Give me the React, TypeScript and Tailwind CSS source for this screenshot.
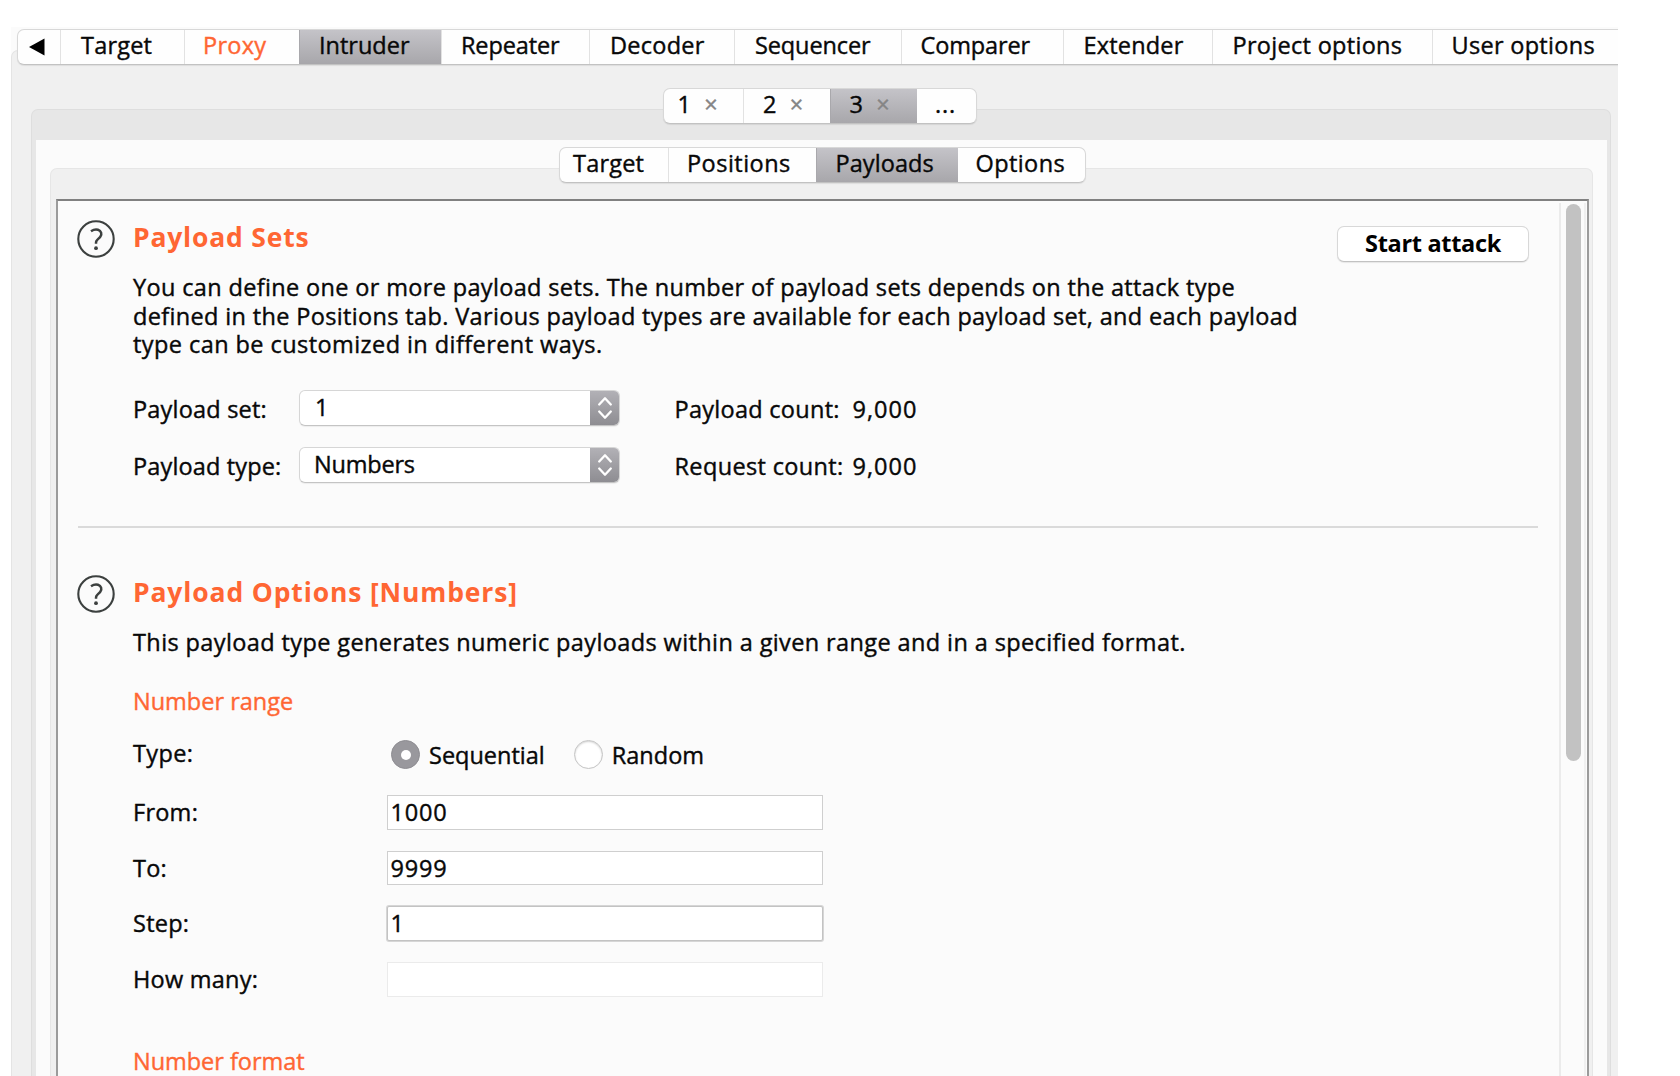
import type { ReactNode } from "react";

function Tab({ label, className, selected }: { label: ReactNode; className: string; selected?: boolean }) {
  return (
    <button
      className={`flex shrink-0 items-center whitespace-nowrap border-l text-left ${className} ${
        selected ? "-my-px border-[#a9a8ac] bg-linear-to-b from-[#c5c4c9] to-[#a7a6aa]" : "border-[#e2e2e2]"
      }`}
    >
      {label}
    </button>
  );
}

function NumberedTab({ n, className, selected }: { n: string; className: string; selected?: boolean }) {
  return (
    <Tab
      className={className}
      selected={selected}
      label={
        <>
          <span>{n}</span>
          <span className="ml-[13px] text-[#858585]">×</span>
        </>
      }
    />
  );
}

function HelpIcon({ className }: { className: string }) {
  return (
    <svg className={`size-[38px] shrink-0 ${className}`} viewBox="0 0 38 38" fill="none" stroke="#3c403f">
      <circle cx="19" cy="19" r="17.7" strokeWidth="2.1" />
      <path d="M14 11.2C16.5 9.6 19 9.2 21 9.8c3.200 1 4.300 4.400 2.300 7-1.300 1.700-3.300 2.600-4 4.400-.3.800-.3 1.600-.3 2.600" strokeWidth="2.500" />
      <circle cx="19" cy="28.200" r="1.900" fill="#3c403f" stroke="none" />
    </svg>
  );
}

function Select({ value, pad }: { value: string; pad: string }) {
  return (
    <div className="flex h-9 w-[321px] overflow-hidden rounded-[6px] border border-[#d6d6d6] border-b-[#c4c4c4] bg-white shadow-[0_1px_1px_rgba(0,0,0,0.06)]">
      <div className={`flex-1 pb-[2px] leading-[32px] ${pad}`}>{value}</div>
      <div className="-my-px -mr-px flex w-[30px] items-center justify-center bg-linear-to-b from-[#b3b2b7] to-[#8d8c91]">
        <svg width="16" height="24" viewBox="0 0 16 24" fill="none" stroke="white" strokeWidth="2.300" strokeLinecap="round" strokeLinejoin="round">
          <path d="M2.200 8.500 8 2.300l5.800 6.200M2.200 15.500 8 21.700l5.800-6.200" />
        </svg>
      </div>
    </div>
  );
}

function Field({ label, value, box }: { label: string; value: string; box: string }) {
  return (
    <div className="flex h-[34.5px] items-center">
      <label className="w-[253.5px] tracking-[0.25px]">{label}</label>
      <div className={`h-[34.5px] w-[436px] bg-white pl-[3px] leading-[32.5px] tracking-[0.8px] ${box}`}>{value}</div>
    </div>
  );
}

function Radio({ label, checked }: { label: string; checked?: boolean }) {
  return (
    <label className="flex items-center">
      {checked ? (
        <span className="flex size-[29px] items-center justify-center rounded-full border border-[#8e8d92] bg-[#99989d]">
          <span className="size-[10px] rounded-full bg-white" />
        </span>
      ) : (
        <span className="size-[29px] rounded-full border border-[#c4c4c4] bg-white shadow-[inset_0_1px_2px_rgba(0,0,0,0.18)]" />
      )}
      <span className="ml-[9px] pt-[2px] tracking-[0px]">{label}</span>
    </label>
  );
}

const tabBar =
  "relative z-10 flex h-[36px] overflow-hidden border border-[#d8d8d8] border-b-[#c2c2c2] bg-[#fefefe] shadow-[0_1px_1px_rgba(0,0,0,0.08)]";

export default function App() {
  return (
    <div className="h-[1076px] w-[1680px] overflow-hidden bg-white pl-[11px] pt-[27px] font-['Open_Sans','Noto_Sans',sans-serif] text-[23.5px] leading-[28.7px] tracking-[0.36px] text-[#080808] [-webkit-text-stroke-width:0.4px]">
      <div className="flex h-[1049px] w-[1607px] flex-col overflow-hidden bg-[#fbfbfb] pt-[2px]">
        <nav className={`${tabBar} ml-[6px] w-[1610px] shrink-0 rounded-l-[7px]`}>
          <button className="flex w-[42px] items-center pl-[11px]">
            <svg width="16" height="18" viewBox="0 0 16 18">
              <path d="M0 9 15.500.5v17z" fill="#000" />
            </svg>
          </button>
          <Tab className="w-[124px] pb-[3px] pl-5 tracking-[0.19px]" label="Target" />
          <Tab className="w-[115px] pb-[3px] pl-[18px] tracking-[0.25px] text-[#ff6633]" label="Proxy" />
          <Tab className="w-[142px] pb-[3px] pl-[19px] tracking-[0px]" label="Intruder" selected />
          <Tab className="w-[148px] pb-[3px] pl-[19px] tracking-[-0.13px]" label="Repeater" />
          <Tab className="w-[145px] pb-[3px] pl-5 tracking-[0.25px]" label="Decoder" />
          <Tab className="w-[167px] pb-[3px] pl-5 tracking-[-0.12px]" label="Sequencer" />
          <Tab className="w-[162px] pb-[3px] pl-[18.5px] tracking-[-0.13px]" label="Comparer" />
          <Tab className="w-[149px] pb-[3px] pl-[19.5px] tracking-[0.18px]" label="Extender" />
          <Tab className="w-[220px] pb-[3px] pl-[19.5px] tracking-[0.3px]" label="Project options" />
          <Tab className="w-[190px] pb-[3px] pl-[18.5px] tracking-[0.3px]" label="User options" />
        </nav>

        <div className="-mt-[15px] flex grow flex-col rounded-tl-[7px] border-l border-t border-[#e4e4e4] bg-[#f0f0f0] pt-[37px]">
          <nav className={`${tabBar} ml-[651px] w-[314px] shrink-0 rounded-[7px]`}>
            <NumberedTab className="w-[79px] border-l-0 pb-[3px] pl-[13.5px]" n="1" />
            <NumberedTab className="w-[87px] pb-[3px] pl-[19px]" n="2" />
            <NumberedTab className="w-[87px] pb-[3px] pl-[18.5px]" n="3" selected />
            <Tab className="w-[60px] border-l-0 pb-[3px] pl-[18px] tracking-[0.8px]" label="..." />
          </nav>

          <div className="-mt-[15px] ml-[19px] flex w-[1580px] grow flex-col rounded-t-[7px] border border-b-0 border-[#dedede] bg-[#e7e7e7] pl-1 pr-[3px] pt-[30px]">
            <div className="flex grow flex-col bg-[#fbfbfb] pt-[7px]">
              <nav className={`${tabBar} ml-[523px] w-[527px] shrink-0 rounded-[7px]`}>
                <Tab className="w-[108px] border-l-0 pb-[3px] pl-[13px] tracking-[0.19px]" label="Target" />
                <Tab className="w-[148px] pb-[3px] pl-[18px] tracking-[0.47px]" label="Positions" />
                <Tab className="w-[142px] pb-[3px] pl-[18.5px] tracking-[0.08px]" label="Payloads" selected />
                <Tab className="w-[128px] border-l-0 pb-[3px] pl-[17.5px] tracking-[0.41px]" label="Options" />
              </nav>

              <div className="-mt-[15px] ml-[14px] flex w-[1543px] grow flex-col rounded-t-[7px] border border-b-0 border-[#e6e6e6] bg-[#f0f0f0] pl-[5px] pr-[3px] pt-[30px]">
                <div className="flex grow border-2 border-b-0 border-x-[#9b9b9b] border-t-[#808080] bg-[#fbfbfb]">
                  <main className="w-[1501px] shrink-0 pt-[19px]">
                    <section className="flex pl-[19px]">
                      <HelpIcon className="" />
                      <div className="ml-[18px]">
                        <h2 className="h-9 text-[26.5px] font-bold leading-[35px] tracking-[0.8px] text-[#ff6633] [-webkit-text-stroke-width:0]">
                          Payload Sets
                        </h2>
                        <p className="mt-[17px] w-[1204px] whitespace-nowrap tracking-[0.35px]">
                          You can define one or more payload sets. The number of payload sets depends on the attack type
                          <br />
                          defined in the Positions tab. Various payload types are available for each payload set, and each payload
                          <br />
                          <span className="tracking-[0.43px]">type can be customized in different ways.</span>
                        </p>
                        <div className="mt-[31px] flex flex-col gap-[21.5px]">
                          <div className="flex h-[35.5px] items-center">
                            <span className="w-[166px] pt-[2px] tracking-[0.2px]">Payload set:</span>
                            <Select value="1" pad="pl-[15px]" />
                            <span className="ml-[54.5px] w-[178px] pt-[2px] tracking-[0.28px]">Payload count:</span>
                            <span className="pt-[2px] tracking-[1px]">9,000</span>
                          </div>
                          <div className="flex h-[35.5px] items-center">
                            <span className="w-[166px] pt-[2px] tracking-[0.15px]">Payload type:</span>
                            <Select value="Numbers" pad="pl-[14px] tracking-[-0.2px]" />
                            <span className="ml-[54.5px] w-[178px] pt-[2px] tracking-[0.35px]">Request count:</span>
                            <span className="pt-[2px] tracking-[1px]">9,000</span>
                          </div>
                        </div>
                      </div>
                      <button className="mt-[6px] h-[36px] w-[192px] shrink-0 rounded-[7px] border border-[#d8d8d8] border-b-[#c2c2c2] bg-white pb-[3px] text-center font-bold leading-[32px] tracking-[-0.32px] text-black shadow-[0_1px_1px_rgba(0,0,0,0.08)] [-webkit-text-stroke-width:0]">
                        Start attack
                      </button>
                    </section>

                    <hr className="ml-5 mt-[43px] h-[2px] w-[1460px] border-0 bg-[#dadada]" />

                    <section className="mt-[46px] flex pl-[19px]">
                      <HelpIcon className="mt-px" />
                      <div className="ml-[18px]">
                        <h2 className="h-9 whitespace-nowrap text-[26.5px] font-bold leading-9 tracking-[0.86px] text-[#ff6633] [-webkit-text-stroke-width:0]">
                          Payload Options [Numbers]
                        </h2>
                        <p className="mt-[18px] whitespace-nowrap tracking-[0.39px]">
                          This payload type generates numeric payloads within a given range and in a specified format.
                        </p>
                        <h3 className="mt-[31px] h-7 leading-7 tracking-[0px] text-[#ff6633]">Number range</h3>
                        <div className="mt-[21.5px] flex h-9 items-center">
                          <span className="w-[258px] pb-[2px]">Type:</span>
                          <div className="flex gap-[29px]">
                            <Radio label="Sequential" checked />
                            <Radio label="Random" />
                          </div>
                        </div>
                        <div className="mt-[22.3px] flex flex-col gap-[21.2px]">
                          <Field label="From:" value="1000" box="border border-[#cfcfcf]" />
                          <Field label="To:" value="9999" box="border border-[#cfcfcf]" />
                          <Field label="Step:" value="1" box="rounded-[2px] border border-[#c3c3c3] shadow-[0_0_0_1px_#d6d6d6]" />
                          <Field label="How many:" value="" box="border border-[#ebebeb]" />
                        </div>
                        <h3 className="mt-[50.2px] h-7 leading-7 tracking-[-0.03px] text-[#ff6633]">Number format</h3>
                      </div>
                    </section>
                  </main>

                  <div className="mt-[2px] w-[27px] shrink-0 border-x-2 border-l-[#ebebeb] border-r-[#f0f0f0] pl-[5px] pt-px">
                    <div className="h-[557px] w-[15px] rounded-full bg-[#c2c2c2]" />
                  </div>
                </div>
              </div>
            </div>
          </div>
        </div>
      </div>
    </div>
  );
}
